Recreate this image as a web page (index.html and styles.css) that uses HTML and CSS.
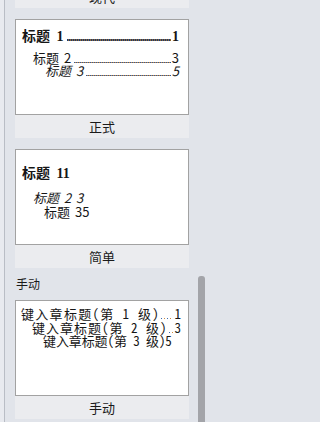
FILE: index.html
```html
<!DOCTYPE html>
<html lang="zh-CN">
<head>
<meta charset="utf-8">
<title>目录</title>
<link rel="stylesheet" href="styles.css">
</head>
<body>
<div class="window">
  <div class="gutter"></div>
  <div class="panel">
    <div class="section first">
      <div class="item">
        <div class="caption">现代</div>
      </div>
      <div class="item">
        <div class="preview formal">
          <div class="row r1"><span class="t">标题 1</span><span class="lead thick"></span><span class="n">1</span></div>
          <div class="row r2"><span class="t">标题 2</span><span class="lead"></span><span class="n">3</span></div>
          <div class="row r3"><span class="t">标题 3</span><span class="lead"></span><span class="n">5</span></div>
        </div>
        <div class="caption">正式</div>
      </div>
      <div class="item">
        <div class="preview simple">
          <div class="row r1">标题 11</div>
          <div class="row r2">标题 2 3</div>
          <div class="row r3">标题 35</div>
        </div>
        <div class="caption">简单</div>
      </div>
    </div>
    <div class="group-title">手动</div>
    <div class="section">
      <div class="item">
        <div class="preview manual">
          <div class="row r1"><span class="t">键入章标题(第 1 级)</span><span class="lead dots"></span><span class="n">1</span></div>
          <div class="row r2"><span class="t">键入章标题(第 2 级)</span><span class="lead dots"></span><span class="n">3</span></div>
          <div class="row r3"><span class="t">键入章标题(第 3 级)</span><span class="n">5</span></div>
        </div>
        <div class="caption">手动</div>
      </div>
    </div>
  </div>
  <div class="scrollbar"><div class="thumb"></div></div>
</div>
</body>
</html>
```

FILE: styles.css
```css
* { box-sizing: border-box; margin: 0; padding: 0; }
html, body { width: 205px; height: 422px; overflow: hidden; }
body {
  background: #e1e4ea;
  font-family: "Noto Sans CJK SC", "Noto Sans", sans-serif;
  color: #161616;
}
.window { display: flex; height: 422px; }
.gutter { width: 4px; background: #e8eaef; }
.panel {
  flex: 1;
  min-width: 0;
  border-left: 1px solid #b9bdc5;
  background: #e1e4ea;
  padding: 0 9px 0 10px;
  overflow: hidden;
}
.scrollbar { width: 7px; padding-top: 276px; display: flex; flex-direction: column; }
.thumb { flex: 1; background: #a3a4a9; border-radius: 3px 3px 0 0; }

.section { display: flex; flex-direction: column; gap: 11px; }
.section.first { margin-top: -15px; }
.item { display: flex; flex-direction: column; }
.preview {
  height: 96px;
  background: #ffffff;
  border: 1px solid #a2a2a2;
  overflow: hidden;
}
.caption {
  height: 23px;
  line-height: 23px;
  text-align: center;
  background: #ebecef;
  font-size: 13px;
  color: #1a1a1a;
}
.group-title {
  padding: 8px 0 8px 1px;
  font-size: 12px;
  line-height: 16px;
  color: #1a1a1a;
}

.row { display: flex; align-items: baseline; white-space: nowrap; }
.lead {
  flex: 1;
  min-width: 0;
  height: 1px;
  margin: 0 1px 0 3px;
  background: repeating-linear-gradient(to right, #2d5c9e 0 1px, #c98a44 1px 2px);
}
.lead.thick {
  height: 2px;
  background: repeating-linear-gradient(to right, #173c78 0 1px, #8f6430 1px 2px);
}
.lead.dots {
  margin: 0 2px 0 1px;
  background: repeating-linear-gradient(to right, #3b6db0 0 1px, transparent 1px 3px, #d38b3d 3px 4px, transparent 4px 6px);
}
.n { flex: none; }

.formal { padding: 8px 9px 0 6px; }
.formal .r1 {
  font-family: "Liberation Serif", "Noto Sans CJK SC", serif;
  font-weight: bold;
  font-size: 14px;
  line-height: 18px;
  word-spacing: 3px;
}
.formal .r2 { margin: 5px 0 0 11px; font-size: 13px; line-height: 13px; word-spacing: 2px; }
.formal .r3 { margin-left: 23px; font-size: 13px; line-height: 13px; font-style: italic; word-spacing: 2px; }

.simple { padding: 15px 9px 0 6px; }
.simple .r1 {
  font-family: "Liberation Serif", "Noto Sans CJK SC", serif;
  font-weight: bold;
  font-size: 14px;
  line-height: 18px;
  word-spacing: 3px;
}
.simple .r2 { margin: 8px 0 0 11px; font-size: 13px; line-height: 14px; font-style: italic; word-spacing: 2px; }
.simple .r3 { margin-left: 22px; font-size: 13px; line-height: 13px; word-spacing: 2px; }

.manual { padding: 6px 7px 0 5px; }
.manual .row {
  font-size: 13px;
  line-height: 13.5px;
  font-feature-settings: "hwid" 1;
}
.manual .r1 .t { letter-spacing: 1.3px; }
.manual .r2 { margin-left: 11px; }
.manual .r2 .t { letter-spacing: 1px; }
.manual .r3 { margin-left: 22px; }
.manual .r3 .t { letter-spacing: -0.1px; }
```
